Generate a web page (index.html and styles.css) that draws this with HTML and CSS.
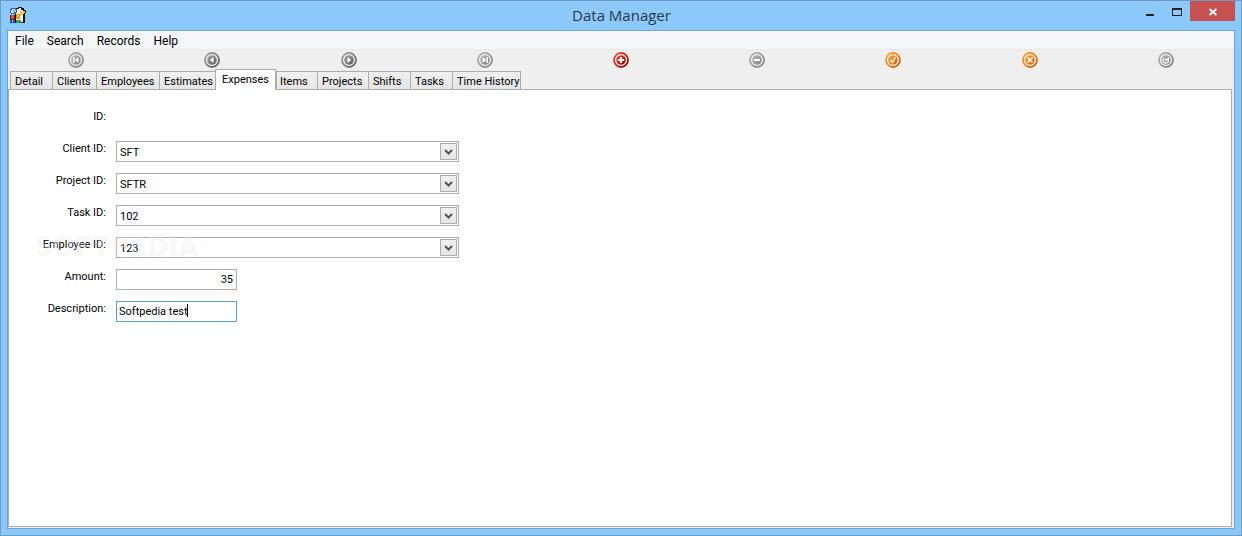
FILE: index.html
```html
<!DOCTYPE html>
<html lang="en">
<head>
<meta charset="UTF-8">
<meta name="viewport" content="width=device-width, initial-scale=1.0">
<title>Data Manager</title>
<link rel="stylesheet" href="styles.css">
</head>
<body>
<!-- Shared gradients for the toolbar icons -->
<svg class="defs" width="0" height="0" aria-hidden="true">
  <defs>
    <linearGradient id="gray" x1="0" y1="0" x2="1" y2="1"><stop offset="0" stop-color="#b8b8b8"/><stop offset="1" stop-color="#808080"/></linearGradient>
    <linearGradient id="dark" x1="0" y1="0" x2="1" y2="1"><stop offset="0" stop-color="#a8a8a8"/><stop offset="1" stop-color="#5c5c5c"/></linearGradient>
    <linearGradient id="red" x1="0" y1="0" x2="1" y2="1"><stop offset="0" stop-color="#ff5038"/><stop offset="1" stop-color="#960000"/></linearGradient>
    <linearGradient id="orange" x1="0" y1="0" x2="1" y2="1"><stop offset="0" stop-color="#ffa03c"/><stop offset=".6" stop-color="#f47c10"/><stop offset="1" stop-color="#b85400"/></linearGradient>
  </defs>
</svg>

<div class="window">
  <header class="titlebar">
    <svg class="app-icon" width="16" height="16" viewBox="0 0 16 16" shape-rendering="crispEdges" aria-hidden="true">
      <path d="M5 1h3V0h4v1h2v2h2v3h-1v10H5z" fill="#111"/>
      <path d="M6 2h3V1h2v2h2v12H6z" fill="#fff"/>
      <path d="M1 1h5v1h1v4H6v1H1V6H0V2h1z" fill="#2f62b0"/>
      <path d="M2 2h3v1h1v2H4v1H1V3h1z" fill="#dceaff"/>
      <path d="M3 3h2v2H3z" fill="#6aa2ea"/>
      <path d="M10 4h5v2h-1v1h-2v2h-2z" fill="#f7c544"/>
      <path d="M0 8h5v5H0z" fill="#5b2414"/>
      <path d="M1 8h3v4H1z" fill="#d85a20"/>
      <path d="M6 7h4v5H6z" fill="#f08c1c"/>
      <path d="M7 8h2v2H7z" fill="#ffc070"/>
      <path d="M0 13h5v3H0z" fill="#2244e0"/>
      <path d="M2 13h1v2H2z" fill="#cfe0ff"/>
      <path d="M6 13h5v3H6z" fill="#2d9c3a"/>
    </svg>
    <h1>Data Manager</h1>
    <div class="window-buttons">
      <button class="win-btn minimize" aria-label="Minimize"><svg width="12" height="12" viewBox="0 0 12 12"><path d="M2 9h8v2H2z" fill="#222"/></svg></button>
      <button class="win-btn maximize" aria-label="Maximize"><svg width="12" height="12" viewBox="0 0 12 12"><path d="M1 3h10v8H1zM2 5v5h8V5z" fill="#222" fill-rule="evenodd"/></svg></button>
      <button class="win-btn close" aria-label="Close"><svg width="12" height="12" viewBox="0 0 12 12"><path d="M2.500 4l7 6M9.500 4l-7 6" stroke="#fff" stroke-width="1.800"/></svg></button>
    </div>
  </header>

  <main class="client">
    <nav class="menubar">
      <button>File</button>
      <button>Search</button>
      <button>Records</button>
      <button>Help</button>
    </nav>

    <div class="toolbar">
      <button class="tool" aria-label="First"><svg width="16" height="16" viewBox="0 0 16 16"><circle cx="8" cy="8" r="7" fill="#f4f4f4" stroke="url(#gray)" stroke-width="1.800"/><circle cx="8" cy="8" r="4.800" fill="url(#gray)"/><path d="M5 5h1.500v6H5zM10.500 5v6L6.800 8z" fill="#fff"/></svg></button>
      <button class="tool" aria-label="Previous"><svg width="16" height="16" viewBox="0 0 16 16"><circle cx="8" cy="8" r="7" fill="#f4f4f4" stroke="url(#dark)" stroke-width="1.800"/><circle cx="8" cy="8" r="4.800" fill="url(#dark)"/><path d="M9.500 5v6L6 8z" fill="#fff"/></svg></button>
      <button class="tool" aria-label="Next"><svg width="16" height="16" viewBox="0 0 16 16"><circle cx="8" cy="8" r="7" fill="#f4f4f4" stroke="url(#dark)" stroke-width="1.800"/><circle cx="8" cy="8" r="4.800" fill="url(#dark)"/><path d="M6.500 5v6L10 8z" fill="#fff"/></svg></button>
      <button class="tool" aria-label="Last"><svg width="16" height="16" viewBox="0 0 16 16"><circle cx="8" cy="8" r="7" fill="#f4f4f4" stroke="url(#gray)" stroke-width="1.800"/><circle cx="8" cy="8" r="4.800" fill="url(#gray)"/><path d="M5.500 5v6l3.700-3zM9.500 5H11v6H9.500z" fill="#fff"/></svg></button>
      <button class="tool" aria-label="Add"><svg width="16" height="16" viewBox="0 0 16 16"><circle cx="8" cy="8" r="7" fill="#fff" stroke="url(#red)" stroke-width="1.800"/><circle cx="8" cy="8" r="4.800" fill="url(#red)"/><path d="M7 5h2v2h2v2H9v2H7V9H5V7h2z" fill="#fff"/></svg></button>
      <button class="tool" aria-label="Delete"><svg width="16" height="16" viewBox="0 0 16 16"><circle cx="8" cy="8" r="7" fill="#f4f4f4" stroke="url(#gray)" stroke-width="1.800"/><circle cx="8" cy="8" r="4.800" fill="url(#gray)"/><path d="M5 7h6v2H5z" fill="#fff"/></svg></button>
      <button class="tool" aria-label="Post"><svg width="16" height="16" viewBox="0 0 16 16"><circle cx="8" cy="8" r="7" fill="#fff" stroke="url(#orange)" stroke-width="1.800"/><circle cx="8" cy="8" r="4.800" fill="url(#orange)"/><path d="M5.500 8l2 2.500L10.500 5" fill="none" stroke="#fff" stroke-width="1.500"/></svg></button>
      <button class="tool" aria-label="Cancel"><svg width="16" height="16" viewBox="0 0 16 16"><circle cx="8" cy="8" r="7" fill="#fff" stroke="url(#orange)" stroke-width="1.800"/><circle cx="8" cy="8" r="4.800" fill="url(#orange)"/><path d="M5.500 5.500l5 5M10.500 5.500l-5 5" stroke="#fff" stroke-width="1.500"/></svg></button>
      <button class="tool" aria-label="Refresh"><svg width="16" height="16" viewBox="0 0 16 16"><circle cx="8" cy="8" r="7" fill="#f4f4f4" stroke="url(#gray)" stroke-width="1.800"/><circle cx="8" cy="8" r="4.800" fill="url(#gray)"/><path d="M5.800 6.500a2.800 2.800 0 1 0 4.800 1M7 7l1.500 1.500L11 5.500" fill="none" stroke="#fff" stroke-width="1.200"/></svg></button>
    </div>

    <div class="tabs" role="tablist">
      <button class="tab" role="tab">Detail</button>
      <button class="tab" role="tab">Clients</button>
      <button class="tab" role="tab">Employees</button>
      <button class="tab" role="tab">Estimates</button>
      <button class="tab active" role="tab" aria-selected="true">Expenses</button>
      <button class="tab" role="tab">Items</button>
      <button class="tab" role="tab">Projects</button>
      <button class="tab" role="tab">Shifts</button>
      <button class="tab" role="tab">Tasks</button>
      <button class="tab" role="tab">Time History</button>
    </div>

    <section class="panel" role="tabpanel">
      <form class="form">
        <div class="row">
          <label for="record-id">ID:</label>
          <output id="record-id"></output>
        </div>
        <div class="row">
          <label for="client">Client ID:</label>
          <div class="combo">
            <select id="client"><option>SFT</option></select>
            <span class="arrow"><svg width="9" height="9" viewBox="0 0 9 9"><path d="M1 3l3.500 3.500L8 3" fill="none" stroke="#555" stroke-width="2"/></svg></span>
          </div>
        </div>
        <div class="row">
          <label for="project">Project ID:</label>
          <div class="combo">
            <select id="project"><option>SFTR</option></select>
            <span class="arrow"><svg width="9" height="9" viewBox="0 0 9 9"><path d="M1 3l3.500 3.500L8 3" fill="none" stroke="#555" stroke-width="2"/></svg></span>
          </div>
        </div>
        <div class="row">
          <label for="task">Task ID:</label>
          <div class="combo">
            <select id="task"><option>102</option></select>
            <span class="arrow"><svg width="9" height="9" viewBox="0 0 9 9"><path d="M1 3l3.500 3.500L8 3" fill="none" stroke="#555" stroke-width="2"/></svg></span>
          </div>
        </div>
        <div class="row">
          <label for="employee">Employee ID:</label>
          <div class="combo">
            <select id="employee"><option>123</option></select>
            <span class="arrow"><svg width="9" height="9" viewBox="0 0 9 9"><path d="M1 3l3.500 3.500L8 3" fill="none" stroke="#555" stroke-width="2"/></svg></span>
          </div>
        </div>
        <div class="row">
          <label for="amount">Amount:</label>
          <input id="amount" class="text amount" type="text" value="35">
        </div>
        <div class="row">
          <label for="description">Description:</label>
          <div class="editing">
            <input id="description" class="text current" type="text" value="Softpedia test">
            <span class="caret"></span>
          </div>
        </div>
      </form>
      <div class="watermark" aria-hidden="true">SOFTPEDIA<sup>®</sup></div>
    </section>
  </main>
</div>
</body>
</html>
```
FILE: styles.css
```css
* {
  box-sizing: border-box;
}

body {
  margin: 0;
  font-family: Roboto, "Noto Sans", sans-serif;
  font-size: 11px;
  color: #000;
}

button, input, select {
  margin: 0;
  font: inherit;
  color: inherit;
}

button {
  padding: 0;
  border: none;
  background: none;
}

svg {
  display: block;
}

.defs {
  position: absolute;
}

/* Window frame */
.window {
  display: flex;
  flex-direction: column;
  min-height: 100vh;
  padding: 0 7px 7px;
  border: 1px solid #6b9bc6;
  background: #8dc8fa;
}

.titlebar {
  display: grid;
  grid-template-columns: 1fr auto 1fr;
  height: 29px;
  margin-right: -1px;
}

.app-icon {
  margin: 6px 0 0 2px;
}

.titlebar h1 {
  margin: 0;
  font-family: "Open Sans", sans-serif;
  font-size: 15px;
  line-height: 29px;
  font-weight: normal;
  color: #2a3a48;
}

.window-buttons {
  display: flex;
  justify-content: flex-end;
}

.win-btn {
  display: flex;
  align-items: center;
  justify-content: center;
  width: 27px;
  height: 20px;
}

.win-btn.close {
  width: 45px;
  background: #c75050;
}

/* Client area */
.client {
  flex: 1;
  display: flex;
  flex-direction: column;
  border: 1px solid #6fa3d3;
  margin: 0 -1px -1px;
  background: #efefef;
}

.menubar {
  display: flex;
  gap: 13px;
  height: 19px;
  padding: 2px 7px 0;
  font-size: 12px;
  background: #f4f6f8;
  border-bottom: 1px solid #e8e9eb;
}

.toolbar {
  display: flex;
  height: 20px;
}

.tool {
  flex: 1;
  display: flex;
  align-items: center;
  justify-content: center;
}

/* Tabs */
.tabs {
  display: grid;
  grid-template-columns: 42px 44px 63px 56px 61px 41px 51px 42px 42px 69px;
  grid-template-rows: 19px;
  align-items: end;
  padding-left: 2px;
}

.tab {
  height: 18px;
  padding: 1px 0 0 4px;
  border: 1px solid #acacac;
  border-right: none;
  border-bottom: none;
  background: linear-gradient(#f0f0f0, #e5e5e5);
  line-height: 18px;
  text-align: left;
  white-space: nowrap;
}

.tab:last-child {
  border-right: 1px solid #acacac;
}

.tab.active {
  z-index: 1;
  height: 21px;
  margin-bottom: -1px;
  padding: 0 0 0 6px;
  border-right: 1px solid #acacac;
  background: #fff;
}

.tab.active + .tab {
  padding-left: 3px;
}

.panel {
  flex: 1;
  position: relative;
  margin: 0 2px 1px 0;
  padding: 19px 0;
  border: 1px solid #acacac;
  background: #fff;
}

/* Form */
.form {
  display: grid;
  gap: 11px;
}

.row {
  display: grid;
  grid-template-columns: 97px 343px;
  column-gap: 10px;
  height: 21px;
}

.row label {
  line-height: 16px;
  text-align: right;
}

.combo {
  position: relative;
}

.combo select {
  display: block;
  appearance: none;
  width: 100%;
  height: 21px;
  padding: 1px 22px 0 3px;
  border: 1px solid #abadb3;
  border-radius: 0;
  background: #fff;
}

.arrow {
  position: absolute;
  top: 2px;
  right: 2px;
  display: flex;
  align-items: center;
  justify-content: center;
  width: 17px;
  height: 17px;
  border: 1px solid #acacac;
  background: linear-gradient(#f0f0f0, #e5e5e5);
  pointer-events: none;
}

.text {
  display: block;
  width: 121px;
  height: 21px;
  padding: 0 3px 1px;
  border: 1px solid #abadb3;
  outline: none;
}

.text.amount {
  text-align: right;
}

.text.current {
  padding-left: 2px;
  border-color: #569de5;
}

.editing {
  position: relative;
}

.caret {
  position: absolute;
  top: 3px;
  left: 71px;
  width: 1px;
  height: 13px;
  background: #000;
}

.watermark {
  position: absolute;
  top: 140px;
  left: 24px;
  font-family: "DejaVu Sans", sans-serif;
  font-size: 26px;
  font-weight: bold;
  line-height: 32px;
  color: rgba(255, 255, 255, 0.3);
  text-shadow: 1px 1px 2px rgba(0, 0, 0, 0.04);
  pointer-events: none;
}

.watermark sup {
  font-size: 9px;
  line-height: 9px;
  vertical-align: 10px;
}
```
